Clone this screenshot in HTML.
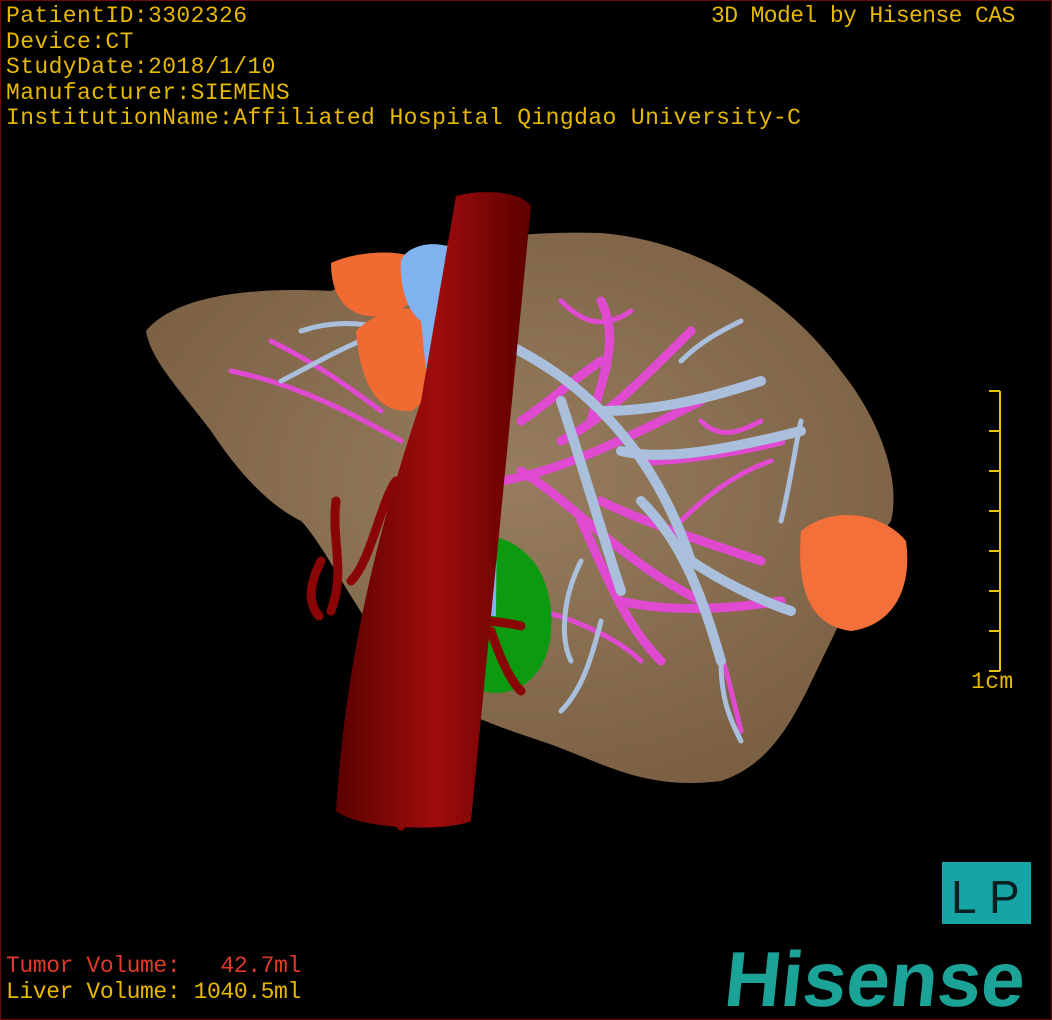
<!DOCTYPE html>
<html><head><style>
html,body{margin:0;padding:0;background:#000;}
#w{position:relative;width:1050px;height:1018px;border:1px solid #6a0a0a;overflow:hidden;background:#000;font-family:"Liberation Mono",monospace;}
.t{position:absolute;color:#e6b800;font-size:23px;line-height:25.5px;white-space:pre;letter-spacing:0.4px}
.r{color:#e03a2a}
svg{position:absolute;left:0;top:0}
</style></head><body><div id="w">
<svg width="1052" height="1020" viewBox="0 0 1052 1020">
<defs>
<radialGradient id="lv" cx="0.5" cy="0.45" r="0.6"><stop offset="0" stop-color="#977d5e"/><stop offset="1" stop-color="#7a5f43"/></radialGradient>
<linearGradient id="ao" x1="0" x2="1"><stop offset="0" stop-color="#5a0000"/><stop offset="0.5" stop-color="#a00c0c"/><stop offset="1" stop-color="#5e0000"/></linearGradient>
</defs>
<path d="M145,330 C170,300 230,285 330,290 L420,250 C480,235 540,230 600,232 C700,240 790,300 840,370 C880,420 900,480 890,520 C860,560 850,600 830,640 C800,700 780,760 720,780 C640,790 600,760 540,740 C480,720 420,700 380,640 C350,600 320,540 300,520 C260,500 230,460 210,430 C180,390 150,360 145,330 Z" fill="url(#lv)"/>
<g fill="none" stroke="#e04ad0" stroke-linecap="round">
<path d="M500,480 C560,470 620,440 700,400 M520,470 C570,500 620,560 700,600 M560,440 C600,420 640,380 690,330 M600,500 C640,520 700,540 760,560 M580,520 C600,560 620,620 660,660 M620,600 C660,610 720,610 780,600 M640,460 C680,460 740,450 780,440 M600,300 C620,340 600,380 590,420 M520,420 C550,400 570,380 600,360" stroke-width="9"/>
<path d="M230,370 C280,380 330,400 400,440 M270,340 C310,360 340,380 380,410 M560,300 C580,320 600,330 630,310 M700,600 C720,640 730,690 740,730 M540,610 C580,620 620,640 640,660 M680,520 C710,490 740,470 770,460 M700,420 C720,440 740,430 760,420" stroke-width="5"/>
</g>
<g fill="none" stroke="#a9bfdc" stroke-linecap="round">
<path d="M500,340 C540,360 570,380 600,410 C640,450 670,500 690,560 M600,410 C650,410 700,400 760,380 M620,450 C660,460 720,450 800,430 M560,400 C580,460 600,530 620,590 M640,500 C680,540 700,590 720,660 M690,560 C720,580 760,600 790,610" stroke-width="10"/>
<path d="M280,380 C320,360 350,340 390,330 M300,330 C330,320 360,320 390,330 M680,360 C700,340 720,330 740,320 M600,620 C590,660 580,690 560,710 M720,660 C720,700 730,720 740,740 M580,560 C560,600 560,640 570,660 M780,520 C790,480 795,440 800,420" stroke-width="5"/>
</g>
<path d="M440,540 C500,520 545,550 550,610 C555,670 520,700 480,690 C440,680 430,640 435,600 Z" fill="#0c9a10"/>
<path d="M330,262 C360,248 410,248 420,262 C425,290 410,310 380,315 C350,318 330,300 330,262 Z" fill="#f06a32"/>
<path d="M355,330 C380,305 420,300 435,320 C440,360 430,400 410,410 C380,412 360,390 355,330 Z" fill="#f06a32"/>
<path d="M800,530 C830,505 880,510 905,540 C912,590 890,625 850,630 C810,625 795,590 800,530 Z" fill="#f3703a"/>
<path d="M400,260 C405,245 430,240 445,245 L498,250 L495,615 L450,615 L420,320 C405,310 398,280 400,260 Z" fill="#7fb2ef"/>
<circle cx="380" cy="595" r="12" fill="#d020d0"/>
<g fill="none" stroke="#8a0606" stroke-linecap="round">
<path d="M335,500 C330,540 345,570 330,610 M320,560 C310,580 305,600 318,615 M395,480 C380,500 370,560 350,580 M440,620 C470,618 500,620 520,625 M490,630 C500,660 510,680 520,690 M400,720 C395,760 400,800 400,825" stroke-width="9"/>
</g>
<path d="M455,195 C480,188 520,190 530,205 L470,820 C450,830 360,830 335,810 C345,650 380,520 420,400 Z" fill="url(#ao)"/>
<g stroke="#e6c400" stroke-width="2" fill="none"><path d="M999,390 V670 M988,390 H999 M988,430 H999 M988,470 H999 M988,510 H999 M988,550 H999 M988,590 H999 M988,630 H999 M988,670 H999"/></g>
<rect x="941" y="861" width="89" height="62" fill="#17a4a4"/>
<text x="950" y="912" font-family="Liberation Sans Narrow,Liberation Sans,sans-serif" font-size="46" fill="#0a2020">L</text>
<text x="988" y="912" font-family="Liberation Sans,sans-serif" font-size="46" fill="#0a2020">P</text>
<text x="722" y="1005" transform="skewX(-6) translate(105,0)" font-family="Liberation Sans,sans-serif" font-weight="bold" font-size="78" fill="#1ba398" textLength="300" lengthAdjust="spacingAndGlyphs">Hisense</text>
</svg>
<div class="t" style="left:5px;top:3px">PatientID:3302326
Device:CT
StudyDate:2018/1/10
Manufacturer:SIEMENS
InstitutionName:Affiliated Hospital Qingdao University-C</div>
<div class="t" style="left:710px;top:3px;letter-spacing:-0.6px">3D Model by Hisense CAS</div>
<div class="t" style="left:970px;top:669px">1cm</div>
<div class="t" style="left:5px;top:953px;letter-spacing:-0.4px"><span class="r">Tumor Volume:   42.7ml</span>
Liver Volume: 1040.5ml</div>
</div></body></html>
